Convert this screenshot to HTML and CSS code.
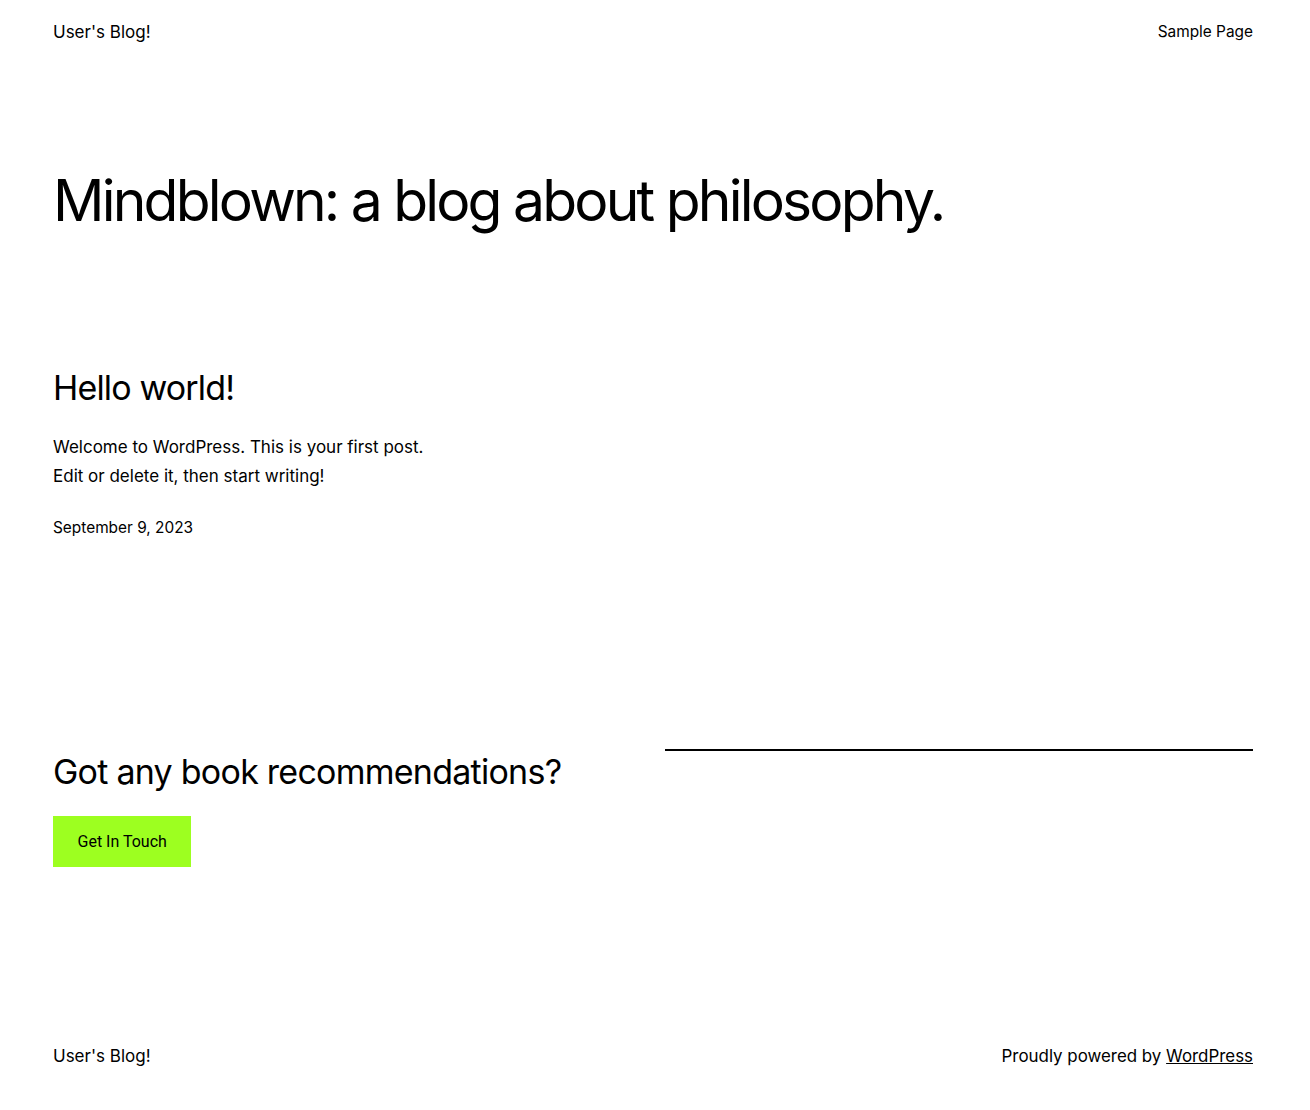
FILE: index.html
```html
<!DOCTYPE html>
<html lang="en">
<head>
<meta charset="utf-8">
<title>User's Blog!</title>
<link rel="stylesheet" href="styles.css">
</head>
<body>
<div class="page">
  <header class="site-header">
    <a class="site-title" href="#">User's Blog!</a>
    <nav class="nav"><a href="#">Sample Page</a></nav>
  </header>
  <main>
    <h1 class="hero">Mindblown: a blog about philosophy.</h1>
    <article class="post">
      <h2 class="post-title">Hello world!</h2>
      <p class="excerpt">Welcome to WordPress. This is your first post.<br>Edit or delete it, then start writing!</p>
      <div class="date">September 9, 2023</div>
    </article>
    <section class="cta">
      <div class="cta-main">
        <h2 class="cta-title">Got any book recommendations?</h2>
        <a class="button" href="#">Get In Touch</a>
      </div>
      <div class="cta-side">
        <hr class="sep">
      </div>
    </section>
  </main>
  <footer class="site-footer">
    <span class="footer-title">User's Blog!</span>
    <span class="credit">Proudly powered by <a href="#">WordPress</a></span>
  </footer>
</div>
</body>
</html>
```
FILE: styles.css
```css
html, body {
  margin: 0;
  padding: 0;
  background: #ffffff;
  color: #000000;
  font-family: Inter, "Noto Sans", sans-serif;
}
a { color: #000; text-decoration: none; }
.page {
  padding: 0 57px 0 53px;
}
.site-header {
  display: flex;
  justify-content: space-between;
  align-items: center;
  padding-top: 21px;
  height: 22px;
}
.site-title {
  font-size: 17px;
  line-height: 22px;
}
.nav a {
  font-size: 15.4px;
  line-height: 22px;
}
.hero {
  margin: 119px 0 0;
  font-size: 57px;
  font-weight: 400;
  line-height: 77px;
  letter-spacing: -2.8px;
}
.post { margin-top: 125px; }
.post-title {
  margin: 0;
  font-size: 34px;
  font-weight: 400;
  line-height: 48px;
  letter-spacing: -0.85px;
}
.excerpt {
  margin: 21px 0 0;
  font-size: 17px;
  line-height: 29px;
}
.date {
  margin-top: 24px;
  font-size: 15.4px;
  line-height: 26px;
}
.cta {
  margin-top: 207px;
  display: grid;
  grid-template-columns: 1fr 1fr;
  column-gap: 24px;
}
.cta-title {
  margin: 0;
  font-size: 34px;
  font-weight: 400;
  line-height: 48px;
  letter-spacing: -0.75px;
}
.button {
  display: inline-block;
  margin-top: 20px;
  background: #9dff20;
  padding: 13px 24.5px;
  font-family: Roboto, Inter, sans-serif;
  font-size: 16px;
  line-height: 25px;
}
.sep {
  margin: 1px 0 0;
  border: 0;
  border-top: 2px solid #000;
}
.site-footer {
  display: flex;
  justify-content: space-between;
  align-items: center;
  margin-top: 178px;
  padding-bottom: 43px;
}
.footer-title, .credit {
  font-size: 17px;
  line-height: 22px;
}
.credit { font-size: 16.9px; }
.credit a { text-decoration: underline; }
```
